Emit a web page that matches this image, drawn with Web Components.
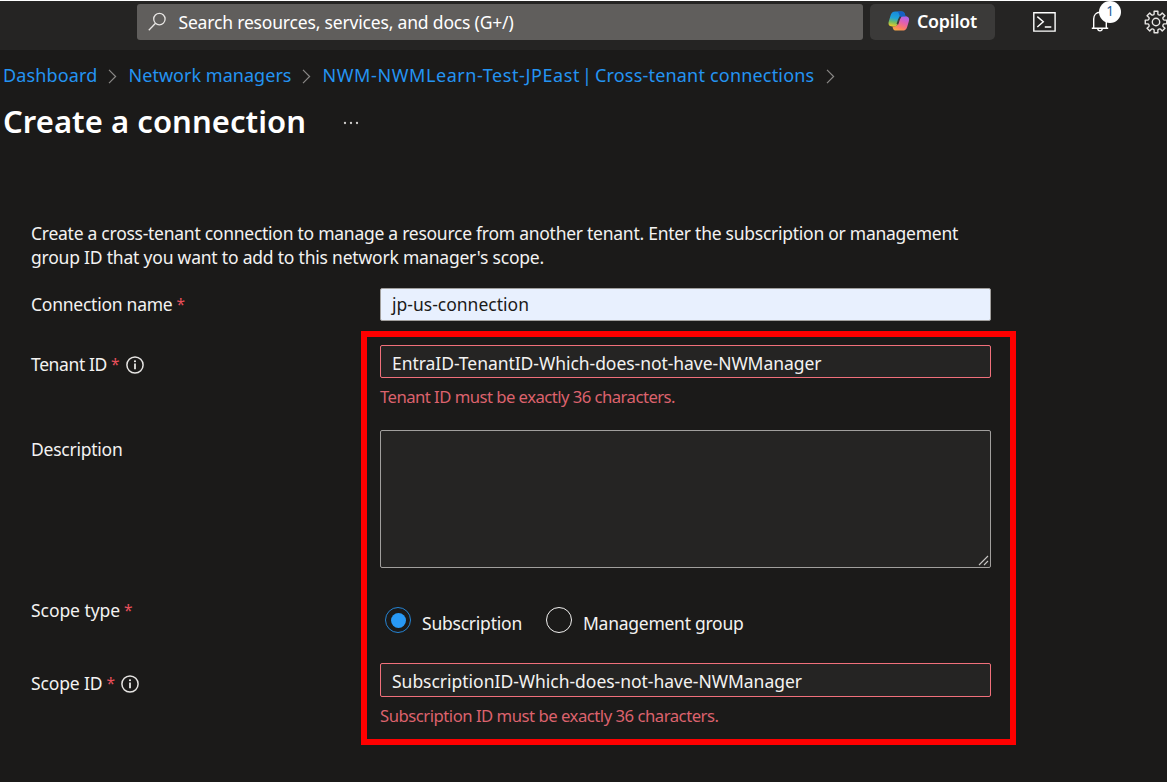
<!DOCTYPE html>
<html lang="en">
<head>
<meta charset="utf-8">
<title>Create a connection</title>
<style>
html,body{margin:0;height:100%;overflow:hidden;background:#1b1a19}
body{font:17.5px/24px "Noto Sans","Open Sans",sans-serif;color:#f3f2f1}
</style>
</head>
<body>
<portal-page></portal-page>
<script>
function define(name, html, setup) {
  const t = document.createElement('template');
  t.innerHTML = html;
  customElements.define(name, class extends HTMLElement {
    connectedCallback() {
      if (this.shadowRoot) return;
      this.attachShadow({ mode: 'open' }).append(t.content.cloneNode(true));
      if (setup) setup.call(this, this.shadowRoot);
    }
  });
}

/* One line of text, tracked so that it fills the given width. */
define('fit-text', `<style>:host{display:inline-block;white-space:nowrap;flex:none}span{display:inline-block}</style><span><slot></slot></span>`, function (r) {
  const s = r.querySelector('span'), w = +this.getAttribute('w');
  const natural = s.getBoundingClientRect().width;
  s.style.letterSpacing = (w - natural) / this.textContent.length + 'px';
  this.style.width = w + 'px';
});

define('crumb-sep', `<style>:host{display:block;flex:none;width:9px;height:15px}svg{display:block}</style>
<svg width="9" height="15" viewBox="0 0 9 15" fill="none" stroke="#8a8886" stroke-width="1.2"><path d="M1 .8 7.6 7.5 1 14.2"/></svg>`);

define('info-icon', `<style>:host{display:block;flex:none;width:18px;height:18px}svg{display:block}</style>
<svg width="18" height="18" viewBox="0 0 18 18"><circle cx="9" cy="9" r="8.1" fill="none" stroke="#e6e4e2" stroke-width="1.5"/><path d="M9 7.6v5.6" stroke="#f3f2f1" stroke-width="1.7"/><circle cx="9" cy="5.2" r="1.05" fill="#f3f2f1"/></svg>`);

define('top-bar', `<style>
:host{display:flex;box-sizing:border-box;height:50px;background:#252423;border-top:1px solid #fff;padding:3px 0 0 137px;overflow:hidden}
.search{display:flex;box-sizing:border-box;width:726px;height:36px;background:#605e5c;border-radius:3px;padding:6px 0 0 11px;flex:none;color:#fff}
.search svg{flex:none;margin:2px 12.5px 0 0}
.copilot{display:flex;box-sizing:border-box;margin-left:7px;width:125px;height:36px;background:#3b3a39;border-radius:5px;padding:5px 0 0 18px;flex:none;font-weight:600;font-size:17.8px;color:#fff}
.copilot svg{flex:none;margin:2px 7px 0 0}
.icons{display:flex;flex:none;margin-left:38px}
.icons>svg{flex:none;display:block}
.bell{position:relative;flex:none;width:30px;height:30px;margin-left:35px}
.bell svg{display:block}
.badge{position:absolute;left:8px;top:-3px;width:22px;height:22px;border-radius:50%;background:#fff;color:#1b5c9c;font-size:13.5px;line-height:21px;text-align:center}
</style>
<div class="search">
<svg width="18" height="20" viewBox="0 0 18 20" fill="none" stroke="#e8e6e4" stroke-width="1.3"><circle cx="11.4" cy="7.1" r="5.7"/><path d="M7.5 11.3.8 18.2"/></svg>
<fit-text w="335">Search resources, services, and docs (G+/)</fit-text></div>
<div class="copilot">
<svg width="22" height="20" viewBox="0 0 22 20">
<defs>
<linearGradient id="a" x1=".5" y1="0" x2=".3" y2="1"><stop offset="0" stop-color="#1788dc"/><stop offset=".45" stop-color="#20a4d8"/><stop offset=".72" stop-color="#73bc62"/><stop offset="1" stop-color="#f2cb27"/></linearGradient>
<linearGradient id="b" x1=".75" y1="0" x2=".3" y2="1"><stop offset="0" stop-color="#a864f0"/><stop offset=".4" stop-color="#e25fb0"/><stop offset=".75" stop-color="#fb7a68"/><stop offset="1" stop-color="#f6a646"/></linearGradient>
</defs>
<path d="M14.8 5.2h1.8c3.7 0 5.2 1.9 4.2 5.2l-1.5 5c-.9 2.9-2.3 4.2-5 4.2H8.1c-1.8 0-2.8-.8-3.2-2.4l-.4-1.8h1.8c1.9 0 3-.8 3.6-2.7l1.3-4.2c.7-2.2 1.8-3.3 3.6-3.3Z" fill="url(#b)"/>
<path d="M7.4.4h6.4c1.7 0 2.5.8 3 2.5l.7 2.3h-2.1c-2.1 0-3.3 1-4 3.1l-1.4 4.2c-.7 2.1-1.8 3.1-3.9 3.1H4.8c-3.6 0-5-1.8-4-5.2l1.6-5.5C3.2 1.8 4.7.4 7.4.4Z" fill="url(#a)"/>
<path d="M13.8.4c1.7 0 2.5.8 3 2.5l.7 2.3h-2.1c-1.5 0-2.5.5-3.2 1.5l-1-3.3C10.7 1.5 10.1.7 9.2.4Z" fill="#1560c4"/>
<path d="M9.4 13.2l1.5-4.5 1.6-3" stroke="#3b3a39" stroke-width="1.8" fill="none"/>
</svg>
<fit-text w="60">Copilot</fit-text></div>
<div class="icons">
<svg width="23" height="30" viewBox="0 0 23 30" fill="none" stroke="#fff" stroke-width="1.4"><path d="M.8 8.8h21.3v18.3H.8zM4.3 12.6l6 5.2-6 5.2M11.8 23h6.5"/></svg>
<div class="bell">
<svg width="20" height="30" viewBox="0 0 20 30" fill="none" stroke="#fff" stroke-width="1.4"><path d="M.8 24.3h16.4M2.7 24V15c0-4 2.6-6.7 6.3-6.7s6.3 2.7 6.3 6.7v9M6.7 24.5c.2 3.2 4.4 3.2 4.6 0"/></svg>
<div class="badge">1</div></div>
<svg style="margin-left:22.5px" width="24" height="36" viewBox="0 0 24 36" fill="none" stroke="#e8e6e4" stroke-width="1.4"><circle cx="12" cy="18" r="3.7"/><path class="g"/></svg>
</div>`, function (r) {
  /* Eight rounded teeth round the hub. */
  const P = [];
  for (let i = 0; i < 8; i++) {
    const c = i * 45;
    [[-13, 8.3], [-10, 10.9], [10, 10.9], [13, 8.3]].forEach(([da, q]) => {
      const a = (c + da) * Math.PI / 180;
      P.push((12 + q * Math.sin(a)).toFixed(2) + ' ' + (18 - q * Math.cos(a)).toFixed(2));
    });
  }
  let d = 'M' + P[0];
  for (let i = 0; i < 8; i++) {
    const k = i * 4;
    d += 'L' + P[k + 1] + 'L' + P[k + 2] + 'L' + P[k + 3] + 'A1.9 1.9 0 0 0 ' + P[(k + 4) % 32];
  }
  const g = r.querySelector('.g');
  g.setAttribute('d', d + 'Z');
  g.setAttribute('stroke-linejoin', 'round');
});

define('bread-crumbs', `<style>
:host{display:flex;padding:13px 0 0 3px;height:24px;color:#2494f2;font-size:18px}
crumb-sep{margin:6px 12px 0 10px}
.s2{margin-left:10px}.s3{margin-left:12px}
.bar{margin:0 3px 0 2px}
</style>
<fit-text w="94.5">Dashboard</fit-text><crumb-sep></crumb-sep><fit-text w="163">Network managers</fit-text><crumb-sep class="s2"></crumb-sep><fit-text w="257.5">NWM-NWMLearn-Test-JPEast</fit-text><span class="bar">|</span><fit-text w="219.5">Cross-tenant connections</fit-text><crumb-sep class="s3"></crumb-sep>`);

define('page-title', `<style>
:host{display:flex;padding:12px 0 0 3px;height:46px;line-height:44px;font-size:31px;font-weight:600;color:#fff}
svg{margin:22px 0 0 37px}
</style><slot></slot>
<svg width="18" height="4" viewBox="0 0 18 4" fill="#d2d0ce"><circle cx="2" cy="2" r="1.15"/><circle cx="8" cy="2" r="1.15"/><circle cx="14" cy="2" r="1.15"/></svg>`);

define('form-row', `<style>
:host{display:grid;grid-template-columns:349px 611px;height:var(--h);align-items:start}
.label{display:flex;padding-top:var(--lp)}
.star{color:#e8505b;margin:0 0 0 4px;width:9px;font-size:15.5px}
info-icon{margin:4px 0 0 var(--ig,6px)}
.ctl{padding-top:var(--cp,0px)}
</style><div class="label"></div><div class="ctl"><slot></slot></div>`, function (r) {
  const l = r.querySelector('.label');
  l.innerHTML = `<fit-text w="${this.getAttribute('w')}">${this.getAttribute('label')}</fit-text>` +
    (this.hasAttribute('required') ? '<span class="star">*</span>' : '') +
    (this.hasAttribute('info') ? '<info-icon></info-icon>' : '');
});

define('text-box', `<style>
:host{display:block;box-sizing:border-box;height:33px;border:1px solid #a19f9d;border-radius:2px;background:#252423;padding:5px 0 0 11px}
:host([filled]){background:#e8f0fe;color:#1b1a19;padding-top:3px}
:host([invalid]){border-color:#f1707b}
:host([area]){height:138px;display:flex;justify-content:flex-end;align-items:flex-end;padding:0 1px 1px 0}
svg{display:none}:host([area]) svg{display:block}
</style><slot></slot><svg width="11" height="11" viewBox="0 0 11 11" stroke="#c8c6c4" stroke-width="1.1"><path d="M1 10 10 1M6 10l4-4"/></svg>`);

define('error-note', `<style>:host{display:block;color:#dc626d;font-size:16.7px;padding-top:7px}</style><slot></slot>`);

define('radio-option', `<style>
:host{display:flex}
i{box-sizing:border-box;width:26px;height:26px;border:1.5px solid #f3f2f1;border-radius:50%;display:grid;place-items:center;margin-right:11px;flex:none}
:host([checked]) i{border-color:#2583d2}
:host([checked]) i::after{content:"";width:15px;height:15px;border-radius:50%;background:#2899f5}
div{padding-top:4px}
</style><i></i><div><slot></slot></div>`);

define('portal-page', `<style>
:host{display:block;position:relative;width:1167px;height:782px;overflow:hidden}
.intro{padding:76px 0 0 31px}
.intro fit-text{display:block}
.form{padding:19px 0 0 31px}
.radios{display:flex;padding-left:5px}
.radios radio-option+radio-option{margin-left:24px}
.mark{position:absolute;left:361px;top:331px;width:655px;height:414px;box-sizing:border-box;border:6px solid #f00}
</style>
<top-bar></top-bar>
<bread-crumbs></bread-crumbs>
<page-title><fit-text w="303">Create a connection</fit-text></page-title>
<div class="intro"><fit-text w="927">Create a cross-tenant connection to manage a resource from another tenant. Enter the subscription or management</fit-text><fit-text w="513">group ID that you want to add to this network manager's scope.</fit-text></div>
<div class="form">
<form-row label="Connection name" w="141.5" required style="--h:57px;--lp:4px"><text-box filled><fit-text w="137">jp-us-connection</fit-text></text-box></form-row>
<form-row label="Tenant ID" w="76" required info style="--h:85px;--lp:7px"><text-box invalid><fit-text w="429.5">EntraID-TenantID-Which-does-not-have-NWManager</fit-text></text-box><error-note><fit-text w="295">Tenant ID must be exactly 36 characters.</fit-text></error-note></form-row>
<form-row label="Description" w="91.5" style="--h:168px;--lp:7px"><text-box area></text-box></form-row>
<form-row label="Scope type" w="89" required style="--h:65px;--lp:0px;--cp:9px"><div class="radios"><radio-option checked><fit-text w="100">Subscription</fit-text></radio-option><radio-option><fit-text w="160.5">Management group</fit-text></radio-option></div></form-row>
<form-row label="Scope ID" w="71.5" required info style="--h:80px;--lp:8px;--ig:5px"><text-box invalid style="height:34px"><fit-text w="410">SubscriptionID-Which-does-not-have-NWManager</fit-text></text-box><error-note><fit-text w="338.5">Subscription ID must be exactly 36 characters.</fit-text></error-note></form-row>
</div>
<div class="mark"></div>`);
</script>
</body>
</html>
